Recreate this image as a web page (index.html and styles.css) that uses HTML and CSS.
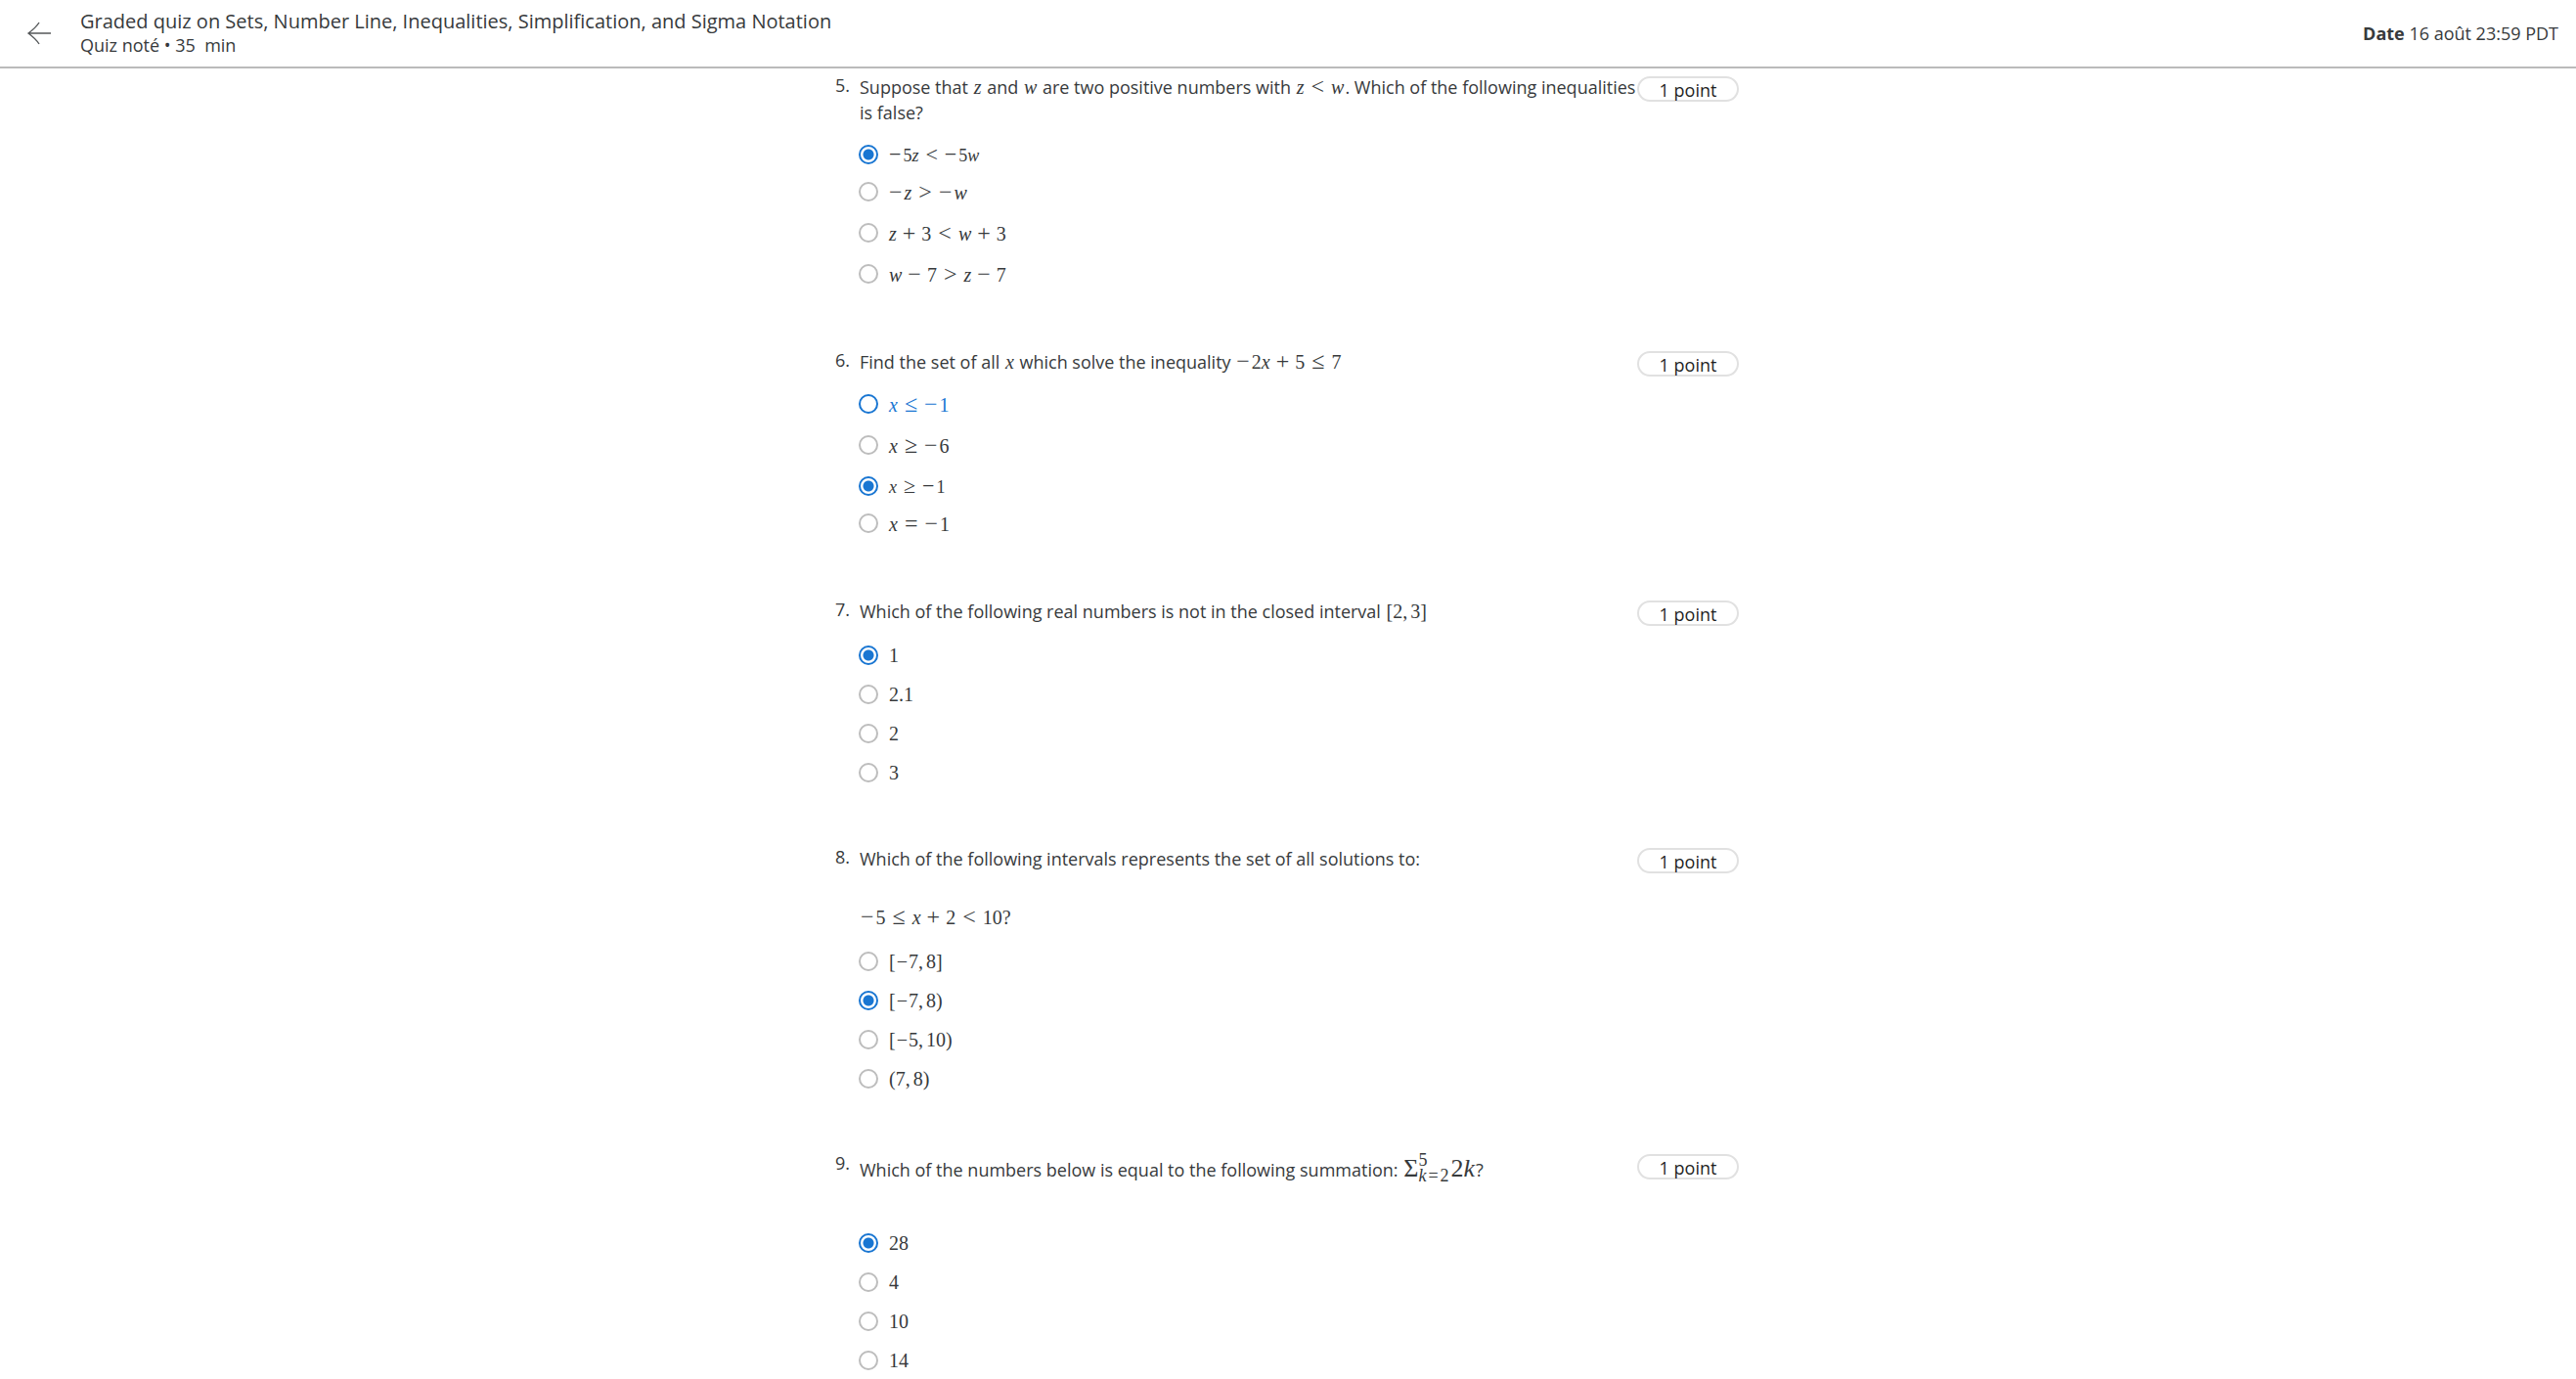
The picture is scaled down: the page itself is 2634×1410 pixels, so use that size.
FILE: index.html
```html
<!DOCTYPE html>
<html lang="fr">
<head>
<meta charset="utf-8">
<meta name="viewport" content="width=device-width, initial-scale=1">
<title>Graded quiz on Sets, Number Line, Inequalities, Simplification, and Sigma Notation</title>
<link rel="stylesheet" href="styles.css">
</head>
<body>
<header class="topbar">
  <button class="back" type="button" aria-label="Retour">
    <svg width="24" height="24" viewBox="0 0 24 24" fill="none" stroke="currentColor" stroke-width="1.4" aria-hidden="true"><path d="M24 12H1M12 1C9 6 5 9 1 12C5 15 9 18 12 23"/></svg>
  </button>
  <div class="heading">
    <h1 class="title">Graded quiz on Sets, Number Line, Inequalities, Simplification, and Sigma Notation</h1>
    <p class="subtitle">Quiz noté • 35 &nbsp;min</p>
  </div>
  <p class="due"><strong>Date</strong> 16 août 23:59 PDT</p>
</header>

<main class="quiz">
  <section class="question">
    <span class="number">5.</span>
    <div class="body">
      <p class="prompt" id="q5">Suppose that <span class="math"><i>z</i></span> and <span class="math"><i>w</i></span> are two positive numbers with <span class="math"><i>z</i><span class="rel">&lt;</span><i>w</i></span>. Which of the following inequalities is false?</p>
      <ul class="options formulas" role="radiogroup" aria-labelledby="q5">
        <li><label class="option"><input type="radio" name="q5" checked><span class="math"><span class="neg">−</span>5<i>z</i><span class="rel">&lt;</span><span class="neg">−</span>5<i>w</i></span></label></li>
        <li><label class="option"><input type="radio" name="q5"><span class="math"><span class="neg">−</span><i>z</i><span class="rel">&gt;</span><span class="neg">−</span><i>w</i></span></label></li>
        <li><label class="option"><input type="radio" name="q5"><span class="math"><i>z</i><span class="bin">+</span>3<span class="rel">&lt;</span><i>w</i><span class="bin">+</span>3</span></label></li>
        <li><label class="option"><input type="radio" name="q5"><span class="math"><i>w</i><span class="bin">−</span>7<span class="rel">&gt;</span><i>z</i><span class="bin">−</span>7</span></label></li>
      </ul>
    </div>
    <span class="points">1 point</span>
  </section>

  <section class="question">
    <span class="number">6.</span>
    <div class="body">
      <p class="prompt" id="q6">Find the set of all <span class="math"><i>x</i></span> which solve the inequality <span class="math"><span class="neg">−</span>2<i>x</i><span class="bin">+</span>5<span class="rel">≤</span>7</span></p>
      <ul class="options formulas" role="radiogroup" aria-labelledby="q6">
        <li><label class="option active"><input type="radio" name="q6"><span class="math"><i>x</i><span class="rel">≤</span><span class="neg">−</span>1</span></label></li>
        <li><label class="option"><input type="radio" name="q6"><span class="math"><i>x</i><span class="rel">≥</span><span class="neg">−</span>6</span></label></li>
        <li><label class="option"><input type="radio" name="q6" checked><span class="math"><i>x</i><span class="rel">≥</span><span class="neg">−</span>1</span></label></li>
        <li><label class="option"><input type="radio" name="q6"><span class="math"><i>x</i><span class="rel">=</span><span class="neg">−</span>1</span></label></li>
      </ul>
    </div>
    <span class="points">1 point</span>
  </section>

  <section class="question">
    <span class="number">7.</span>
    <div class="body">
      <p class="prompt" id="q7">Which of the following real numbers is not in the closed interval <span class="math interval">[2<span class="comma">,</span>3]</span></p>
      <ul class="options" role="radiogroup" aria-labelledby="q7">
        <li><label class="option"><input type="radio" name="q7" checked><span class="math">1</span></label></li>
        <li><label class="option"><input type="radio" name="q7"><span class="math">2.1</span></label></li>
        <li><label class="option"><input type="radio" name="q7"><span class="math">2</span></label></li>
        <li><label class="option"><input type="radio" name="q7"><span class="math">3</span></label></li>
      </ul>
    </div>
    <span class="points">1 point</span>
  </section>

  <section class="question">
    <span class="number">8.</span>
    <div class="body">
      <div class="prompt spaced" id="q8">
        <p>Which of the following intervals represents the set of all solutions to:</p>
        <p><span class="math"><span class="neg">−</span>5<span class="rel">≤</span><i>x</i><span class="bin">+</span>2<span class="rel">&lt;</span>10?</span></p>
      </div>
      <ul class="options" role="radiogroup" aria-labelledby="q8">
        <li><label class="option"><input type="radio" name="q8"><span class="math interval">[<span class="neg">−</span>7<span class="comma">,</span>8]</span></label></li>
        <li><label class="option"><input type="radio" name="q8" checked><span class="math interval">[<span class="neg">−</span>7<span class="comma">,</span>8)</span></label></li>
        <li><label class="option"><input type="radio" name="q8"><span class="math interval">[<span class="neg">−</span>5<span class="comma">,</span>10)</span></label></li>
        <li><label class="option"><input type="radio" name="q8"><span class="math interval">(7<span class="comma">,</span>8)</span></label></li>
      </ul>
    </div>
    <span class="points">1 point</span>
  </section>

  <section class="question">
    <span class="number">9.</span>
    <div class="body">
      <p class="prompt summation" id="q9">Which of the numbers below is equal to the following summation: <span class="math large">Σ<span class="limits"><span>5</span><span><i>k</i><span class="eq">=</span>2</span></span>2<i>k</i></span>?</p>
      <ul class="options" role="radiogroup" aria-labelledby="q9">
        <li><label class="option"><input type="radio" name="q9" checked><span class="math">28</span></label></li>
        <li><label class="option"><input type="radio" name="q9"><span class="math">4</span></label></li>
        <li><label class="option"><input type="radio" name="q9"><span class="math">10</span></label></li>
        <li><label class="option"><input type="radio" name="q9"><span class="math">14</span></label></li>
      </ul>
    </div>
    <span class="points">1 point</span>
  </section>
</main>
</body>
</html>
```
FILE: styles.css
```css
* {
  box-sizing: border-box;
}

body {
  margin: 0;
  background: #fff;
  color: #373a3c;
  font: 18px/26px "Open Sans", sans-serif;
}

p,
h1,
ul {
  margin: 0;
  padding: 0;
}

/* Top bar */
.topbar {
  display: flex;
  align-items: center;
  padding: 8px 18px 8px 28px;
  border-bottom: 2px solid #bbb;
}

.back {
  display: flex;
  margin-right: 30px;
  padding: 0;
  border: 0;
  background: none;
  color: #55585a;
  cursor: pointer;
}

.heading {
  flex: 1;
  padding-bottom: 4px;
}

.title {
  font-size: 20px;
  font-weight: 400;
  line-height: 28px;
}

.subtitle {
  line-height: 20px;
}

.due {
  line-height: 24px;
}

.due strong {
  font-weight: 700;
}

/* Questions */
.quiz {
  max-width: 926px;
  margin: 0 auto;
  padding: 6px 2px 0 0;
}

.question {
  display: grid;
  grid-template-columns: 24px 1fr 104px;
  align-items: start;
  margin-bottom: 45px;
}

.number {
  line-height: 22px;
}

.points {
  margin-top: 2px;
  padding-top: 2px;
  border: 2px solid #e1e1e1;
  border-radius: 13px;
  color: #1f1f1f;
  line-height: 20px;
  text-align: center;
}

.prompt {
  padding-left: 1px;
}

.spaced {
  display: grid;
  gap: 34px;
}

.summation {
  padding-bottom: 26px;
  line-height: 34px;
}

/* Answers */
.options {
  margin-top: 22px;
  list-style: none;
}

.options.formulas {
  margin-top: 20px;
}

.option {
  display: flex;
  gap: 10px;
  height: 40px;
  line-height: 20px;
}

.formulas .option {
  height: 42px;
}

.option input {
  appearance: none;
  width: 20px;
  height: 20px;
  margin: 0;
  border: 2px solid #bdbdbd;
  border-radius: 50%;
}

.option input:checked {
  border-color: #1976d2;
  background: radial-gradient(circle, #1976d2 5px, transparent 6px);
}

.formulas .option:has(input:checked) {
  height: 38px;
}

.formulas .option input:checked + .math {
  font-size: 18px;
}

.active {
  color: #1976d2;
}

.active input {
  border-color: #1976d2;
}

/* Formulas */
.math {
  margin: 0 1px;
  font-family: "Liberation Serif", serif;
  font-size: 20px;
  line-height: 20px;
  white-space: nowrap;
}

.rel,
.bin,
.neg {
  font-size: 24px;
  line-height: 20px;
}

.rel {
  margin: 0 7px;
}

.bin {
  margin: 0 6px;
}

.neg {
  margin-right: 2px;
}

.formulas input:checked + .math .rel,
.formulas input:checked + .math .neg {
  font-size: 22px;
}

.interval .neg {
  margin: 0 1px;
  font-size: 20px;
}

.comma {
  margin-right: 3px;
}

.large {
  font-size: 26px;
}

.limits {
  display: inline-grid;
  margin-right: 2px;
  font-size: 18px;
  line-height: 16px;
  vertical-align: 11px;
}

.eq {
  margin: 0 2px;
}
```
